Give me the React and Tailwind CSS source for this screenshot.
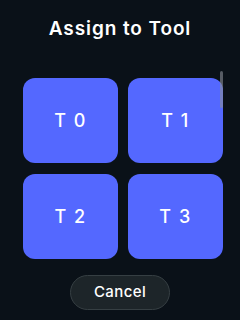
export default function App() {
  const tools = ["T 0", "T 1", "T 2", "T 3"];
  return (
    <div
      className="w-[240px] h-[320px] bg-[#0a1118] flex flex-col overflow-hidden"
      style={{ fontFamily: "Inter, 'Noto Sans', sans-serif" }}
    >
      <div className="h-[58px] flex items-center justify-center">
        <h1 className="text-white text-[19px] font-semibold tracking-[0.9px]">Assign to Tool</h1>
      </div>
      <div className="relative h-[207px] pt-[20px] overflow-hidden">
        <div className="grid grid-cols-2 gap-x-[10px] gap-y-[11px] pl-[23px] pr-[17px]">
          {tools.map((t) => (
            <button
              key={t}
              className="h-[85px] rounded-[12px] bg-[#5468ff] text-white text-[18px] font-medium tracking-[1.5px] flex items-center justify-center"
            >
              {t}
            </button>
          ))}
        </div>
        <div className="absolute left-[220px] top-[13px] w-[3px] h-[37px] rounded-full bg-[#8a8f98]/60" />
      </div>
      <div className="flex justify-center pt-[10px]">
        <button className="w-[100px] h-[35px] rounded-full bg-[#1d2529] border border-[#363f43] text-white text-[15px] font-medium tracking-[0.4px]">
          Cancel
        </button>
      </div>
    </div>
  );
}
